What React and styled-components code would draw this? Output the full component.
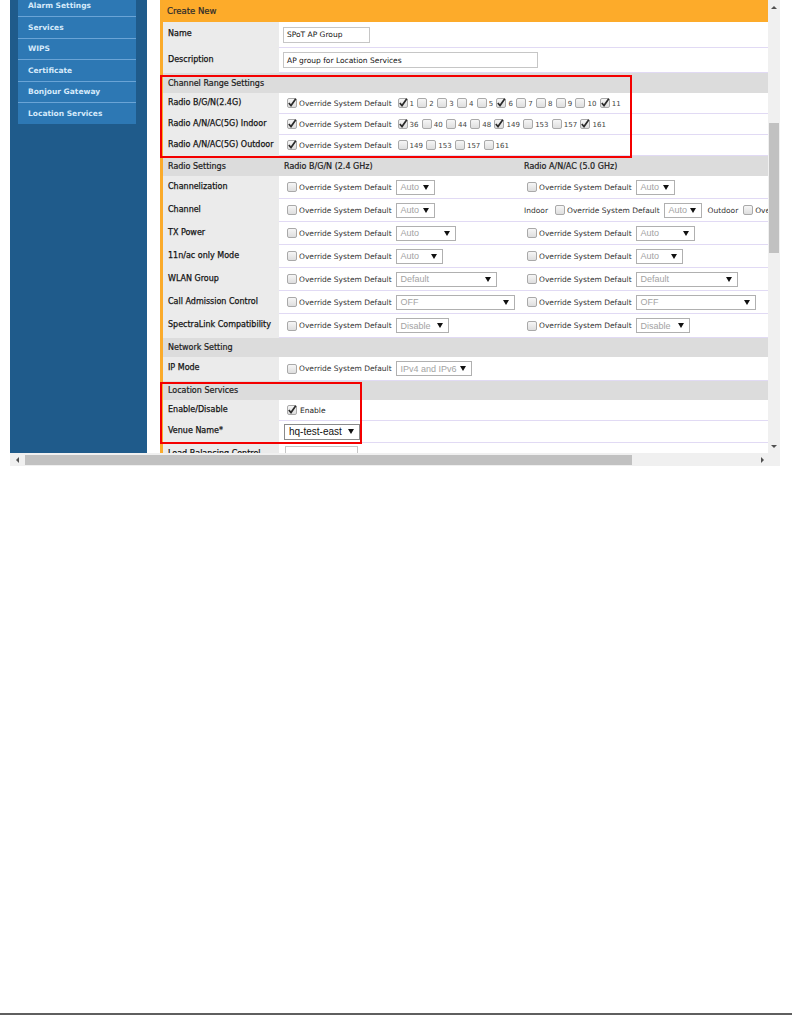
import React from "react";
import styled, { createGlobalStyle } from "styled-components";

const Global = createGlobalStyle`
  html, body { margin: 0; padding: 0; background: #fff; }
  body { font-family: "DejaVu Sans", Verdana, sans-serif; }
  * { box-sizing: border-box; }
`;

const Page = styled.div`
  width: 792px;
  height: 1015px;
  display: flex;
  flex-direction: column;
  overflow: hidden;
`;

const Shot = styled.div`
  margin-left: 10px;
  width: 770px;
  height: 466px;
  display: flex;
  flex-direction: column;
`;

const Viewport = styled.div`
  display: flex;
  height: 453px;
`;

const Sidebar = styled.nav`
  width: 137px;
  flex: none;
  margin-right: 13px;
  padding: 0 11px 0 8px;
  background: #1f5b8b;
  overflow: hidden;
`;

const NavList = styled.ul`
  list-style: none;
  margin: -5.5px 0 0;
  padding: 0;
`;

const NavItem = styled.li`
  height: 21.5px;
  display: flex;
  align-items: center;
  padding-left: 10px;
  background: #2d78b4;
  border-top: ${(p) => (p.$first ? "none" : "1px solid #6aa4d6")};
  color: #d6eafb;
  font-size: 7.5px;
  font-weight: bold;
  white-space: nowrap;
`;

const Main = styled.main`
  flex: 1;
  min-width: 0;
  padding-left: 3px;
  background: #fbab2b;
  overflow: hidden;
  color: #1b1b1b;
`;

const TitleBar = styled.div`
  height: 22px;
  display: flex;
  align-items: center;
  padding-left: 4px;
  background: #fdab2a;
  font-size: 8.5px;
  color: #2a2a2a;
  -webkit-text-stroke: 0.2px #2a2a2a;
`;

const Row = styled.div`
  display: grid;
  grid-template-columns: ${(p) => (p.$split ? "116px 241px 1fr" : "116px 1fr")};
  height: ${(p) => p.$h}px;
  background: #fff;
`;

const Label = styled.div`
  display: flex;
  align-items: center;
  padding: 0 0 3px 5px;
  background: #ebebeb;
  font-size: 8px;
  color: #151515;
  -webkit-text-stroke: 0.25px #151515;
  white-space: nowrap;
  overflow: hidden;
`;

const Value = styled.div`
  display: flex;
  align-items: center;
  padding-left: ${(p) => p.$pad ?? 8}px;
  border-bottom: 1px solid #e1daf4;
  white-space: nowrap;
  overflow: hidden;
  min-width: 0;
`;

const SectionHeader = styled.div`
  display: grid;
  grid-template-columns: ${(p) => (p.$split ? "116px 241px 1fr" : "1fr")};
  height: ${(p) => p.$h}px;
  background: #dcdcdc;
  font-size: 8px;
  color: #1b1b1b;
  -webkit-text-stroke: 0.2px #1b1b1b;
`;

const HeadCell = styled.div`
  display: flex;
  align-items: center;
  padding-left: ${(p) => p.$pad ?? 5}px;
  white-space: nowrap;
`;

const Section = styled.section`
  position: relative;
`;

const Highlight = styled.div`
  position: absolute;
  left: -3px;
  top: ${(p) => p.$top}px;
  bottom: ${(p) => p.$bottom}px;
  width: ${(p) => p.$w}px;
  border: 2px solid #f40000;
  pointer-events: none;
`;

const TextInput = styled.span`
  display: inline-flex;
  align-items: center;
  width: ${(p) => p.$w}px;
  height: 16px;
  padding-left: 3px;
  border: 1px solid #c6c6c6;
  background: #fff;
  font-size: 7.5px;
  color: #111;
`;

const Box = styled.span`
  width: 10px;
  height: 10px;
  flex: none;
  display: inline-flex;
  align-items: center;
  justify-content: center;
  margin-left: ${(p) => p.$ml ?? 0}px;
  border: 1px solid #a9a9a9;
  border-radius: 2px;
  background: linear-gradient(#f6f6f6, #dedede);
`;

const Text = styled.span`
  margin-left: ${(p) => p.$ml ?? 2}px;
  font-size: 7.5px;
  color: ${(p) => p.$color ?? "#333"};
`;

const Num = styled.span`
  margin: 0 3.3px 0 2px;
  padding-top: 2px;
  font-size: 7px;
  color: #444;
`;

const SelectBox = styled.span`
  display: inline-flex;
  align-items: center;
  justify-content: space-between;
  flex: none;
  width: ${(p) => p.$w}px;
  height: ${(p) => (p.$strong ? 16 : 15)}px;
  margin-left: ${(p) => p.$ml ?? 4}px;
  padding: 0 5px 0 4px;
  border: 1px solid ${(p) => (p.$strong ? "#8a8a8a" : "#b0b0b0")};
  background: #fff;
  font-family: "Liberation Sans", Arial, sans-serif;
  font-size: ${(p) => (p.$strong ? 10 : 9)}px;
  color: ${(p) => (p.$strong ? "#111" : "#a3a3a3")};
`;

const Caret = styled.span`
  width: 0;
  height: 0;
  border-left: 3px solid transparent;
  border-right: 3px solid transparent;
  border-top: 5px solid #111;
`;

const VScroll = styled.div`
  width: 12px;
  flex: none;
  display: flex;
  flex-direction: column;
  background: #f0f0f0;
`;

const ArrowBtn = styled.div`
  height: 14px;
  flex: none;
  display: flex;
  align-items: center;
  justify-content: center;
  margin-top: ${(p) => (p.$end ? "auto" : "0")};
`;

const TriUp = styled.span`
  width: 0;
  height: 0;
  border-left: 3px solid transparent;
  border-right: 3px solid transparent;
  border-bottom: 3px solid #505050;
`;

const TriDown = styled(TriUp)`
  border-bottom: none;
  border-top: 3px solid #505050;
`;

const TriLeft = styled.span`
  width: 0;
  height: 0;
  border-top: 3px solid transparent;
  border-bottom: 3px solid transparent;
  border-right: 3px solid #505050;
`;

const TriRight = styled(TriLeft)`
  border-right: none;
  border-left: 3px solid #505050;
`;

const VThumb = styled.div`
  width: 10px;
  height: 130px;
  margin: ${(p) => p.$offset}px 1px 0;
  background: #c1c1c1;
`;

const HScroll = styled.div`
  height: 13px;
  display: flex;
  align-items: center;
  background: #f0f0f0;
`;

const HArrow = styled.div`
  width: ${(p) => p.$w}px;
  height: 13px;
  flex: none;
  display: flex;
  align-items: center;
  justify-content: center;
`;

const HThumb = styled.div`
  width: 607px;
  height: 10px;
  background: #c1c1c1;
`;

const HTrack = styled.div`
  flex: 1;
`;

const Corner = styled.div`
  width: 12px;
  height: 13px;
  flex: none;
  background: #f0f0f0;
`;

const BottomRule = styled.div`
  margin-top: auto;
  height: 2px;
  background: #5f5f5f;
`;

const Check = ({ on, ml }) => (
  <Box $ml={ml}>
    {on && (
      <svg width="10" height="10" viewBox="0 0 10 10" style={{ overflow: "visible" }}>
        <path d="M1.8 5 L4 7.6 L8.8 0.8" fill="none" stroke="#2b2b2b" strokeWidth="1.7" />
      </svg>
    )}
  </Box>
);

const Select = ({ w, children, strong, ml }) => (
  <SelectBox $w={w} $strong={strong} $ml={ml}>
    <span>{children}</span>
    <Caret />
  </SelectBox>
);

const Override = ({ checked }) => (
  <>
    <Check on={checked} />
    <Text>Override System Default</Text>
  </>
);

const Channels = ({ list }) => (
  <>
    {list.map(([n, on], i) => (
      <React.Fragment key={n}>
        <Check on={on} ml={i === 0 ? 6 : 0} />
        <Num>{n}</Num>
      </React.Fragment>
    ))}
  </>
);

const channelRows = [
  {
    label: "Radio B/G/N(2.4G)",
    h: 21,
    list: [
      ["1", true], ["2", false], ["3", false], ["4", false], ["5", false], ["6", true],
      ["7", false], ["8", false], ["9", false], ["10", false], ["11", true],
    ],
  },
  {
    label: "Radio A/N/AC(5G) Indoor",
    h: 21,
    list: [
      ["36", true], ["40", false], ["44", false], ["48", false], ["149", true],
      ["153", false], ["157", false], ["161", true],
    ],
  },
  {
    label: "Radio A/N/AC(5G) Outdoor",
    h: 21,
    list: [["149", false], ["153", false], ["157", false], ["161", false]],
  },
];

const settings = [
  { label: "Channelization", left: ["Auto", 39], right: ["Auto", 39] },
  { label: "Channel", left: ["Auto", 39], right: "channel" },
  { label: "TX Power", left: ["Auto", 60], right: ["Auto", 59] },
  { label: "11n/ac only Mode", left: ["Auto", 47], right: ["Auto", 47] },
  { label: "WLAN Group", left: ["Default", 101], right: ["Default", 102] },
  { label: "Call Admission Control", left: ["OFF", 119], right: ["OFF", 120] },
  { label: "SpectraLink Compatibility", left: ["Disable", 53], right: ["Disable", 54], h: 24 },
];

const nav = ["Alarm Settings", "Services", "WIPS", "Certificate", "Bonjour Gateway", "Location Services"];

export default function App() {
  return (
    <Page>
      <Global />
      <Shot>
        <Viewport>
          <Sidebar>
            <NavList>
              {nav.map((n, i) => (
                <NavItem key={n} $first={i === 0}>{n}</NavItem>
              ))}
            </NavList>
          </Sidebar>

          <Main>
            <TitleBar>Create New</TitleBar>
            <Row $h={26}>
              <Label>Name</Label>
              <Value $pad={4}><TextInput $w={87}>SPoT AP Group</TextInput></Value>
            </Row>
            <Row $h={25}>
              <Label>Description</Label>
              <Value $pad={4}><TextInput $w={255}>AP group for Location Services</TextInput></Value>
            </Row>

            <Section>
              <SectionHeader $h={20}><HeadCell>Channel Range Settings</HeadCell></SectionHeader>
              {channelRows.map((r) => (
                <Row key={r.label} $h={r.h}>
                  <Label>{r.label}</Label>
                  <Value>
                    <Override checked />
                    <Channels list={r.list} />
                  </Value>
                </Row>
              ))}
              <Highlight $top={2} $bottom={-2} $w={472} />
            </Section>

            <SectionHeader $h={20} $split>
              <HeadCell>Radio Settings</HeadCell>
              <HeadCell>Radio B/G/N (2.4 GHz)</HeadCell>
              <HeadCell $pad={4}>Radio A/N/AC (5.0 GHz)</HeadCell>
            </SectionHeader>
            {settings.map((s) => (
              <Row key={s.label} $h={s.h ?? 23} $split>
                <Label>{s.label}</Label>
                <Value>
                  <Override />
                  <Select w={s.left[1]}>{s.left[0]}</Select>
                </Value>
                {s.right === "channel" ? (
                  <Value $pad={4}>
                    <Text $ml={0}>Indoor</Text>
                    <Check ml={7} />
                    <Text>Override System Default</Text>
                    <Select w={38}>Auto</Select>
                    <Text $ml={6}>Outdoor</Text>
                    <Check ml={5} />
                    <Text>Override System Default</Text>
                  </Value>
                ) : (
                  <Value $pad={7}>
                    <Override />
                    <Select w={s.right[1]}>{s.right[0]}</Select>
                  </Value>
                )}
              </Row>
            ))}

            <SectionHeader $h={19}><HeadCell>Network Setting</HeadCell></SectionHeader>
            <Row $h={24}>
              <Label>IP Mode</Label>
              <Value>
                <Override />
                <Select w={76}>IPv4 and IPv6</Select>
              </Value>
            </Row>

            <Section>
              <SectionHeader $h={19}><HeadCell>Location Services</HeadCell></SectionHeader>
              <Row $h={21}>
                <Label>Enable/Disable</Label>
                <Value>
                  <Check on />
                  <Text $ml={3} $color="#222">Enable</Text>
                </Value>
              </Row>
              <Row $h={22}>
                <Label>Venue Name*</Label>
                <Value $pad={5}>
                  <Select w={76} strong ml={0}>hq-test-east</Select>
                </Value>
              </Row>
              <Highlight $top={1} $bottom={-1} $w={202} />
            </Section>

            <Row $h={23}>
              <Label>Load Balancing Control</Label>
              <Value $pad={6}><TextInput $w={73} /></Value>
            </Row>
          </Main>

          <VScroll>
            <ArrowBtn><TriUp /></ArrowBtn>
            <VThumb $offset={109} />
            <ArrowBtn $end><TriDown /></ArrowBtn>
          </VScroll>
        </Viewport>

        <HScroll>
          <HArrow $w={15}><TriLeft /></HArrow>
          <HThumb />
          <HTrack />
          <HArrow $w={12}><TriRight /></HArrow>
          <Corner />
        </HScroll>
      </Shot>
      <BottomRule />
    </Page>
  );
}
